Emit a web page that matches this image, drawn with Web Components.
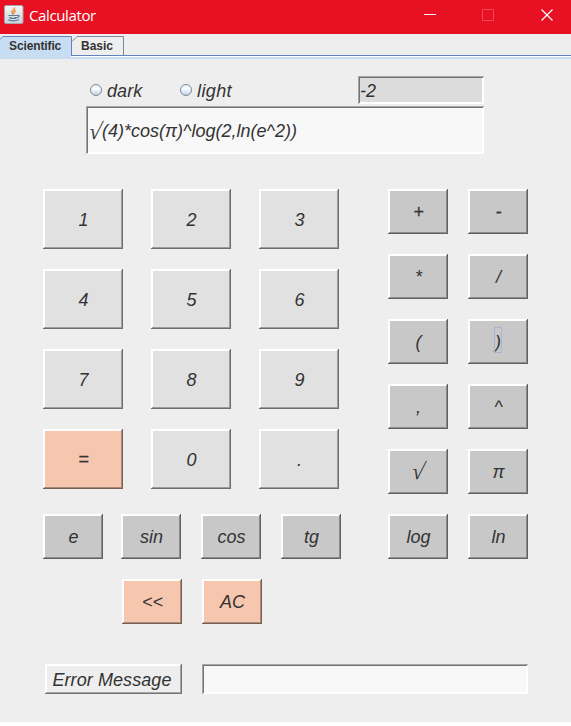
<!DOCTYPE html>
<html lang="en"><head><meta charset="utf-8"><title>Calculator</title>
<style>html,body{margin:0;width:571px;height:726px;overflow:hidden;background:#fff}</style></head>
<body><calc-window></calc-window>
<script>
const define = (name, html) => customElements.define(name, class extends HTMLElement {
  constructor() {
    super();
    const t = document.createElement('template');
    t.innerHTML = html;
    this.attachShadow({mode: 'open'}).append(t.content.cloneNode(true));
  }
});

define('window-controls', `<style>:host{display:block}svg{display:block}</style>
<svg width="147" height="34" fill="none"><path d="M0 14.500h12" stroke="#fff"/><rect x="58.500" y="9.500" width="11" height="11" stroke="#f04556"/><path d="M117.500 9.500l11 11m0-11l-11 11" stroke="#fff" stroke-width="1.200"/></svg>`);

define('window-header', `<style>
:host{display:flex;height:34px;background:#e81123;color:#fff;font:15px "Open Sans","Noto Sans",sans-serif}
.icon{margin:5px 0 0 4px;flex:none}
.name{margin:0 auto 0 5px;line-height:31px;letter-spacing:-.38px}
</style>
<svg class="icon" width="20" height="19"><defs><linearGradient id="g" x2="0" y2="1"><stop stop-color="#f4f6f6"/><stop offset="1" stop-color="#c9d5da"/></linearGradient></defs>
<rect x=".5" y=".5" width="18.500" height="18" rx="1.500" fill="url(#g)" stroke="#a9a3aa"/>
<path d="M10.500 2.500C11 5 7 5.500 8 7.500Q8.300 8.500 9.500 9.500M11.800 5.500Q9 7 10.500 8.500" fill="none" stroke="#ef8c35" stroke-width="1.500"/>
<path d="M4.500 10.500h8.500M5.500 12.500Q9 14 12.500 12.500M13 10.500q3.500-.5 1.500 1.500l-2 1M4 14.800Q9 17 15 14.800M6.500 12v1.500h5V12" fill="none" stroke="#5c7c9c" stroke-width="1.200"/></svg>
<span class="name"><slot></slot></span><window-controls></window-controls>`);

define('tab-item', `<style>
:host{display:block;position:relative;width:var(--w);height:19px;font:bold 12px/21px "Liberation Sans",Arial,sans-serif;color:#333}
svg{position:absolute;inset:0}span{position:relative;padding-left:9px;letter-spacing:var(--ls,0)}
.on{display:none}:host([selected]) .on{display:block}:host([selected]) .off{display:none}
</style>
<svg class="on" width="72" height="19"><path d="M0 3L3 0H72V19H0z" fill="#c8ddf2"/><path d="M0 3.500L3 .5H71.500V19" fill="none" stroke="#6382bf"/></svg>
<svg class="off" width="52" height="19"><path d="M0 5.500L5 .5H51.500V19" fill="none" stroke="#7a8a99"/></svg>
<span><slot></slot></span>`);

define('tab-strip', `<style>
:host{display:flex;height:23px;padding-top:2px;background:linear-gradient(#6382bf,#6382bf) 0 21px/100% 1px no-repeat,linear-gradient(#fff,#fff) 0 22px/100% 1px no-repeat,linear-gradient(#c8ddf2,#c8ddf2) 0 23px/100% 2px no-repeat}
::slotted([selected]){height:21px!important;background:linear-gradient(#c8ddf2,#c8ddf2) 0 19px/71px 4px no-repeat}
</style><slot></slot>`);

define('root-sign', `<style>
:host{display:inline-block;width:13px;height:20px;font:italic 23px/22px "Liberation Serif","Times New Roman",serif;white-space:nowrap}
span{display:inline-block;transform:skewX(-12deg)}
</style><span><slot></slot></span>`);

define('calc-key', `<style>
:host{display:flex;align-items:center;justify-content:center;box-sizing:border-box;width:60px;height:45px;background:#c8c8c8;color:#333;padding:1px 0 0 1px;
box-shadow:inset -1px -1px var(--dark,#616161),inset 1px 1px #fff,inset -2px -2px var(--mid,#8c8c8c),inset 2px 2px #fff}
:host([num]){width:80px;height:60px;background:#e1e1e1;--dark:#6e6e6e;--mid:#9d9d9d}
:host([accent]){background:#f6c6ae;--dark:#785f55;--mid:#ac8a7a}
:host([label]){width:137px;height:30px;background:#eee;--dark:#747474;--mid:#a6a6a6;padding:1px 3px 0 0;letter-spacing:.08px}
:host([heavy]){-webkit-text-stroke:.25px #333;padding-bottom:1px}
span{white-space:pre}
:host([focused]){padding-left:0}
:host([focused]) span{outline:1px solid #a3b8cc;height:24px;line-height:28px;margin-top:-4px}
</style><span><slot></slot></span>`);

define('text-field', `<style>
:host{display:flex;align-items:center;box-sizing:border-box;padding:1px 3px 0;width:var(--w);height:var(--h);background:#f8f8f8;color:#333;
box-shadow:inset 1px 1px #a6a6a6,inset -1px -1px #fff,inset 2px 2px #747474,inset -2px -2px #fff}
:host([result]){background:#dcdcdc;padding-left:2px}
</style><slot></slot>`);

define('radio-option', `<style>
:host{display:flex;align-items:center;width:90px;gap:5px;color:#333}
svg{display:block}span{padding-top:2px;letter-spacing:var(--ls,.1px)}
</style><svg width="12" height="12"><defs><linearGradient id="r" x2="0" y2="1"><stop stop-color="#dfeaf4"/><stop offset=".35" stop-color="#fff"/><stop offset="1" stop-color="#b8cfe5"/></linearGradient></defs><circle cx="6" cy="6" r="5.500" fill="url(#r)" stroke="#7a8a99"/></svg><span><slot></slot></span>`);

define('calc-window', `<style>
:host{display:block;height:722px;background:#eee;font:italic 18px/20px "Liberation Sans",Arial,sans-serif}
.top{display:flex;justify-content:space-between;margin:17px 87px 2px 90px;height:28px}
.radios{display:flex;height:28px}
.expr{margin-left:86px}
.pads{display:flex;gap:47px;margin:35px 0 0 43px}
.left{width:298px}
.nums{display:grid;grid-template-columns:repeat(3,80px);gap:20px 28px}
.ops{display:grid;grid-template-columns:60px 60px;grid-auto-rows:45px;gap:20px;align-content:start}
.fn{display:flex;gap:20px;margin-top:25px}.fn calc-key:first-child{margin-right:-2px}
.edit{display:flex;gap:20px;margin:20px 0 0 79px}
.error{display:flex;gap:20px;margin:40px 0 0 45px}
</style>
<window-header>Calculator</window-header>
<tab-strip><tab-item selected style="--w:72px;--ls:-.12px">Scientific</tab-item><tab-item style="--w:52px">Basic</tab-item></tab-strip>
<div class="top"><div class="radios"><radio-option>dark</radio-option><radio-option style="--ls:.4px">light</radio-option></div><text-field result style="--w:126px;--h:28px">-2</text-field></div>
<text-field class="expr" style="--w:398px;--h:48px"><root-sign>√</root-sign>(4)*cos(π)^log(2,ln(e^2))</text-field>
<div class="pads"><div class="left"><div class="nums">
<calc-key num>1</calc-key><calc-key num>2</calc-key><calc-key num>3</calc-key>
<calc-key num>4</calc-key><calc-key num>5</calc-key><calc-key num>6</calc-key>
<calc-key num>7</calc-key><calc-key num>8</calc-key><calc-key num>9</calc-key>
<calc-key num accent heavy>=</calc-key><calc-key num>0</calc-key><calc-key num>.</calc-key></div>
<div class="fn"><calc-key>e</calc-key><calc-key>sin</calc-key><calc-key>cos</calc-key><calc-key>tg</calc-key></div>
<div class="edit"><calc-key accent>&lt;&lt;</calc-key><calc-key accent>AC</calc-key></div></div>
<div class="ops"><calc-key heavy>+</calc-key><calc-key heavy>-</calc-key><calc-key>*</calc-key><calc-key>/</calc-key><calc-key>(</calc-key><calc-key focused>)</calc-key><calc-key>,</calc-key><calc-key>^</calc-key><calc-key><root-sign>√</root-sign></calc-key><calc-key>π</calc-key><calc-key>log</calc-key><calc-key>ln</calc-key></div></div>
<div class="error"><calc-key label>Error Message</calc-key><text-field style="--w:326px;--h:30px"></text-field></div>`);
</script></body></html>
